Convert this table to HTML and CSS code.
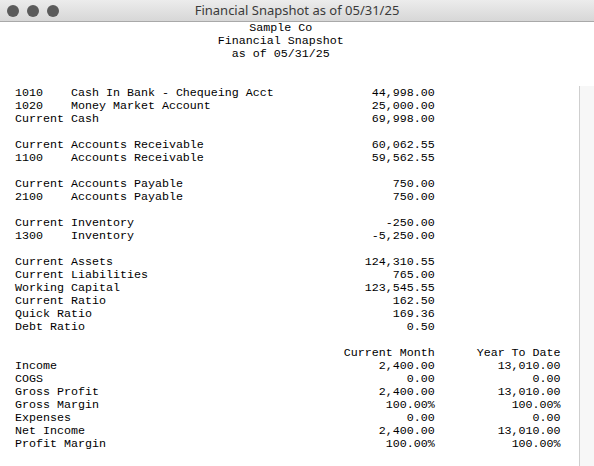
FILE: index.html
```html
<!DOCTYPE html>
<html>
<head>
<meta charset="utf-8">
<title>Financial Snapshot</title>
<link rel="stylesheet" href="styles.css">
</head>
<body>
<div class="window">
  <div class="titlebar">
    <div class="lights"><span class="light"></span><span class="light"></span><span class="light"></span></div>
    <div class="title">Financial Snapshot as of 05/31/25</div>
  </div>
  <div class="content">
    <div class="report">
      <div class="head">
        <div>Sample Co</div>
        <div>Financial Snapshot</div>
        <div>as of 05/31/25</div>
      </div>
      <div class="gap2"></div>

      <div class="row"><span class="code">1010</span><span class="name">Cash In Bank - Chequeing Acct</span><span class="num">44,998.00</span></div>
      <div class="row"><span class="code">1020</span><span class="name">Money Market Account</span><span class="num">25,000.00</span></div>
      <div class="row"><span class="lbl">Current Cash</span><span class="num">69,998.00</span></div>
      <div class="gap"></div>

      <div class="row"><span class="lbl">Current Accounts Receivable</span><span class="num">60,062.55</span></div>
      <div class="row"><span class="code">1100</span><span class="name">Accounts Receivable</span><span class="num">59,562.55</span></div>
      <div class="gap"></div>

      <div class="row"><span class="lbl">Current Accounts Payable</span><span class="num">750.00</span></div>
      <div class="row"><span class="code">2100</span><span class="name">Accounts Payable</span><span class="num">750.00</span></div>
      <div class="gap"></div>

      <div class="row"><span class="lbl">Current Inventory</span><span class="num">-250.00</span></div>
      <div class="row"><span class="code">1300</span><span class="name">Inventory</span><span class="num">-5,250.00</span></div>
      <div class="gap"></div>

      <div class="row"><span class="lbl">Current Assets</span><span class="num">124,310.55</span></div>
      <div class="row"><span class="lbl">Current Liabilities</span><span class="num">765.00</span></div>
      <div class="row"><span class="lbl">Working Capital</span><span class="num">123,545.55</span></div>
      <div class="row"><span class="lbl">Current Ratio</span><span class="num">162.50</span></div>
      <div class="row"><span class="lbl">Quick Ratio</span><span class="num">169.36</span></div>
      <div class="row"><span class="lbl">Debt Ratio</span><span class="num">0.50</span></div>
      <div class="gap"></div>

      <div class="row"><span class="lbl"></span><span class="num">Current Month</span><span class="ytd">Year To Date</span></div>
      <div class="row"><span class="lbl">Income</span><span class="num">2,400.00</span><span class="ytd">13,010.00</span></div>
      <div class="row"><span class="lbl">COGS</span><span class="num">0.00</span><span class="ytd">0.00</span></div>
      <div class="row"><span class="lbl">Gross Profit</span><span class="num">2,400.00</span><span class="ytd">13,010.00</span></div>
      <div class="row"><span class="lbl">Gross Margin</span><span class="num">100.00%</span><span class="ytd">100.00%</span></div>
      <div class="row"><span class="lbl">Expenses</span><span class="num">0.00</span><span class="ytd">0.00</span></div>
      <div class="row"><span class="lbl">Net Income</span><span class="num">2,400.00</span><span class="ytd">13,010.00</span></div>
      <div class="row"><span class="lbl">Profit Margin</span><span class="num">100.00%</span><span class="ytd">100.00%</span></div>
    </div>
    <div class="scroll"></div>
  </div>
</div>
</body>
</html>
```

FILE: styles.css
```css
html, body {
  margin: 0;
  padding: 0;
  background: #ffffff;
}
.window {
  width: 594px;
  height: 466px;
  display: flex;
  flex-direction: column;
  overflow: hidden;
}
.titlebar {
  flex-shrink: 0;
  height: 21px;
  border-bottom: 1px solid #a9a9a9;
  background: linear-gradient(#ececec, #d7d7d7);
  display: flex;
  align-items: center;
  position: relative;
}
.lights {
  display: flex;
  gap: 8px;
  padding-left: 7px;
}
.light {
  width: 12px;
  height: 12px;
  border-radius: 50%;
  background: #5b5b5b;
}
.title {
  position: absolute;
  left: 0;
  right: 0;
  top: 0;
  line-height: 21px;
  text-align: center;
  font-family: "Noto Sans", "Open Sans", sans-serif;
  font-size: 13px;
  color: #3a3a3a;
}
.content {
  flex: 1;
  display: flex;
  min-height: 0;
}
.report {
  flex: 1;
  padding-left: 15px;
  font-family: "Liberation Mono", "Courier New", monospace;
  font-size: 11.67px;
  line-height: 13px;
  color: #000;
}
.head {
  width: 76ch;
  text-align: center;
}
.gap { height: 13px; }
.gap2 { height: 26px; }
.row {
  display: flex;
  height: 13px;
  white-space: pre;
}
.code { width: 8ch; }
.name { width: 37ch; }
.lbl { width: 45ch; }
.num { width: 15ch; text-align: right; }
.ytd { width: 18ch; text-align: right; }
.scroll {
  width: 14px;
  margin-top: 64px;
  border-left: 1px solid #cfcfcf;
  background: #f7f7f7;
}
```
